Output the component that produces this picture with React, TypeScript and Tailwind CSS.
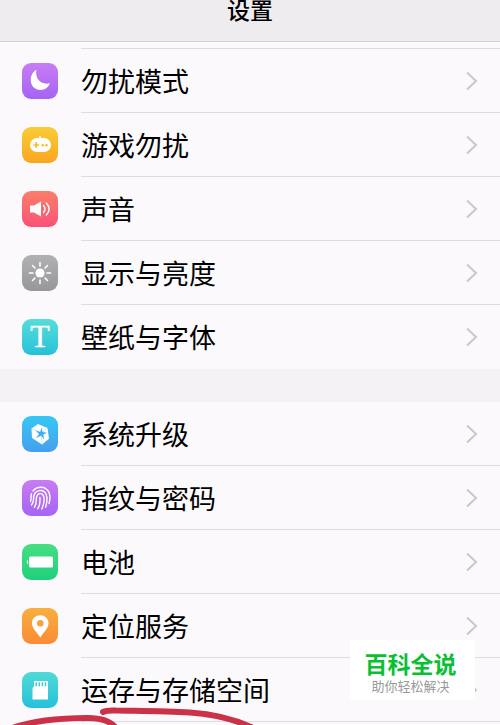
import React from 'react';

type Item = {
  id: string;
  label: string;
  tint: string;
  icon: React.ReactNode;
};

/* Glyphs share a 36x36 box, the same size as the tile behind them */
const MoonGlyph = () => (
  <path d="M14.5 6.8C12.6 14.5 18 22.4 28 20.3C26.3 24.6 22.8 27 18.6 27C13 27 8.7 22.7 8.7 17C8.7 12.3 10.8 8.8 14.5 6.8Z" fill="#fff" />
);

const GamepadGlyph = () => (
  <>
    <path d="M18 12V9" stroke="#fff" strokeWidth="1.6" />
    <rect x="8" y="11" width="21" height="14" rx="7" fill="#fff" />
    <path d="M11.5 18H17M14.2 15.3V20.7" stroke="#f9b926" strokeWidth="1.7" />
    <circle cx="20.8" cy="18.3" r="1.2" fill="#f9b926" />
    <circle cx="24.5" cy="18.3" r="1.2" fill="#f9b926" />
  </>
);

const SpeakerGlyph = () => (
  <>
    <path d="M8 14.5H12L19 10.5V25.5L12 21.5H8Z" fill="#fff" />
    <path d="M21.5 14.5Q24.5 18 21.5 21.5M24.3 12Q30 18 24.3 24" fill="none" stroke="#fff" strokeWidth="1.4" strokeLinecap="round" />
  </>
);

const SunGlyph = () => (
  <>
    <circle cx="18" cy="18" r="4.6" fill="#fff" />
    <path
      d="M18 7.5V11M18 25V28.5M7.5 18H11M25 18H28.5M10.5 10.5L13 13M23 23L25.5 25.5M10.5 25.5L13 23M23 13L25.5 10.5"
      stroke="#fff"
      strokeWidth="1.6"
      strokeLinecap="round"
    />
  </>
);

const FontGlyph = () => (
  <text x="18" y="28" textAnchor="middle" fill="#fff" stroke="#fff" strokeWidth="0.4" className="font-['Liberation_Serif',serif] text-[32px]">
    T
  </text>
);

const UpgradeGlyph = () => (
  <>
    <path d="M16 8L25.5 12L27 22.8L20 28.5L10 22L9.5 12.5Z" fill="#fff" />
    <path d="M10 12.8L19 17.5L25.3 12.3M19 17.5L20 28" fill="none" stroke="#9ad8f8" strokeWidth="0.6" />
    <path d="M19.5 11.5L20.6 16L25 16.8L21.2 18.4L22.2 23.5L19 19.6L14 22.3L17 18L13.5 14.3L18.2 16Z" fill="#3aaeee" />
  </>
);

const FingerprintGlyph = () => (
  <g fill="none" stroke="#fff" strokeWidth="1.4" strokeLinecap="round">
    <path d="M11 11C15 5.8 23 6 26.5 11.5C29 16 28 20 27 23.5" />
    <path d="M8.5 21.5C9.8 19.5 8.3 17 9.5 13.8" />
    <path d="M9.5 25C12.5 21.8 11 19 11.8 16C13.4 9.6 21.4 8.8 24 14C26 18.7 24.8 23.5 23.6 27.2" />
    <path d="M12.3 27.3C15.2 23.5 13.8 20 14.5 17.3C15.5 12.6 20.4 12.6 21.7 16.5C22.9 20.7 21.3 25.5 19.8 29" />
    <path d="M15.7 28.7C18.4 24.8 18.3 21.5 17.9 17.5" />
  </g>
);

const BatteryGlyph = () => (
  <>
    <path d="M6 15.5Q3.5 18 6 20.5Z" fill="#fff" />
    <rect x="7" y="12.5" width="24" height="11" rx="1.5" fill="#fff" />
  </>
);

const PinGlyph = () => (
  <path
    d="M18.3 7.2C13.6 7.2 10 10.7 10 15.2C10 20.5 15.4 24.5 18.3 29.5C21.2 24.5 26.5 20.5 26.5 15.2C26.5 10.7 22.9 7.2 18.3 7.2ZM18.3 12A3.3 3.3 0 1 1 18.3 18.6A3.3 3.3 0 1 1 18.3 12Z"
    fill="#fff"
    fillRule="evenodd"
  />
);

const SdCardGlyph = () => (
  <>
    <path d="M12 9H26V27.5H10.5V16L12 14.5Z" fill="#fff" />
    <path d="M14.2 10.3V14.3M17.3 10.3V14.3M20.4 10.3V14.3M23.5 10.3V14.3" stroke="#40ccd3" strokeWidth="1.5" />
  </>
);

const notifyItems: Item[] = [
  { id: 'dnd', label: '勿扰模式', tint: 'from-[#c77cf3] to-[#a663f4]', icon: <MoonGlyph /> },
  { id: 'game', label: '游戏勿扰', tint: 'from-[#f9cc37] to-[#fba51d]', icon: <GamepadGlyph /> },
  { id: 'sound', label: '声音', tint: 'from-[#fa7e67] to-[#fb4f78]', icon: <SpeakerGlyph /> },
  { id: 'display', label: '显示与亮度', tint: 'from-[#b1b0b5] to-[#97969b]', icon: <SunGlyph /> },
  { id: 'font', label: '壁纸与字体', tint: 'from-[#56dcda] to-[#22c2d8]', icon: <FontGlyph /> },
];

const systemItems: Item[] = [
  { id: 'upgrade', label: '系统升级', tint: 'from-[#35c8f4] to-[#459eee]', icon: <UpgradeGlyph /> },
  { id: 'fingerprint', label: '指纹与密码', tint: 'from-[#c77cf3] to-[#a663f4]', icon: <FingerprintGlyph /> },
  { id: 'battery', label: '电池', tint: 'from-[#45df82] to-[#1dd07e]', icon: <BatteryGlyph /> },
  { id: 'location', label: '定位服务', tint: 'from-[#f8ae40] to-[#fb8b35]', icon: <PinGlyph /> },
  { id: 'storage', label: '运存与存储空间', tint: 'from-[#4fdad6] to-[#24c0da]', icon: <SdCardGlyph /> },
];

function SettingsRow({ item, divider }: { item: Item; divider: boolean }) {
  return (
    <li>
      <a href={`#${item.id}`} className="flex h-16 items-stretch pl-[22px] text-black">
        <span className={`mr-[23px] h-9 w-9 shrink-0 self-center rounded-[9px] bg-linear-to-b ${item.tint}`}>
          <svg viewBox="0 0 36 36" className="h-9 w-9" aria-hidden="true">
            {item.icon}
          </svg>
        </span>
        <span className={`flex flex-1 items-center justify-between border-b pr-[22px] ${divider ? 'border-[#dddce0]' : 'border-transparent'}`}>
          <span className="text-[27px] leading-9">{item.label}</span>
          <svg viewBox="0 0 12 20" className="h-5 w-3" fill="none" stroke="#c8c7cc" strokeWidth="2" aria-hidden="true">
            <path d="M1 1.5L10 10L1 18.5" />
          </svg>
        </span>
      </a>
    </li>
  );
}

function SettingsGroup({ items, lastDivider = false }: { items: Item[]; lastDivider?: boolean }) {
  return (
    <ul className="bg-[#fbf9fc]">
      {items.map((item, i) => (
        <SettingsRow key={item.id} item={item} divider={lastDivider || i < items.length - 1} />
      ))}
    </ul>
  );
}

export default function App() {
  return (
    <div className="relative min-h-screen overflow-hidden bg-[#fbf9fc] font-['Noto_Sans_CJK_SC',sans-serif]">
      <header className="flex h-[42px] items-start justify-center border-b border-[#d3d1d5] bg-[#eeecef]">
        <h1 className="-mt-1 text-[23px] leading-[26px] font-medium text-black">设置</h1>
      </header>

      <main>
        {/* Bottom edge of the row scrolled under the header */}
        <div className="ml-[81px] h-[7px] border-b border-[#dddce0]" />
        <SettingsGroup items={notifyItems} />
        <div className="h-[33px] bg-[#f4f2f5]" />
        <SettingsGroup items={systemItems} lastDivider />
      </main>

      {/* Hand-drawn marker strokes */}
      <svg
        viewBox="0 0 260 25"
        className="pointer-events-none absolute bottom-0 left-0 h-[25px] w-[260px]"
        fill="none"
        stroke="#cb3248"
        strokeWidth="6"
        strokeLinecap="round"
        aria-hidden="true"
      >
        <path d="M103 12Q107 10 116 10.5C145 11 166 11 190 12.5C212 14 231 18 251 27" />
        <path d="M10 29C30 21 62 18 88 18C102 18 110 21 115 27" />
      </svg>

      {/* Site badge */}
      <aside className="absolute right-[25px] bottom-[25px] flex h-[60px] w-[125px] flex-col items-center bg-white pt-2 pr-1">
        <strong className="text-[23px] leading-[30px] font-bold text-[#0bbf35]">百科全说</strong>
        <span className="text-[13px] leading-4 text-[#999999]">助你轻松解决</span>
      </aside>
    </div>
  );
}
